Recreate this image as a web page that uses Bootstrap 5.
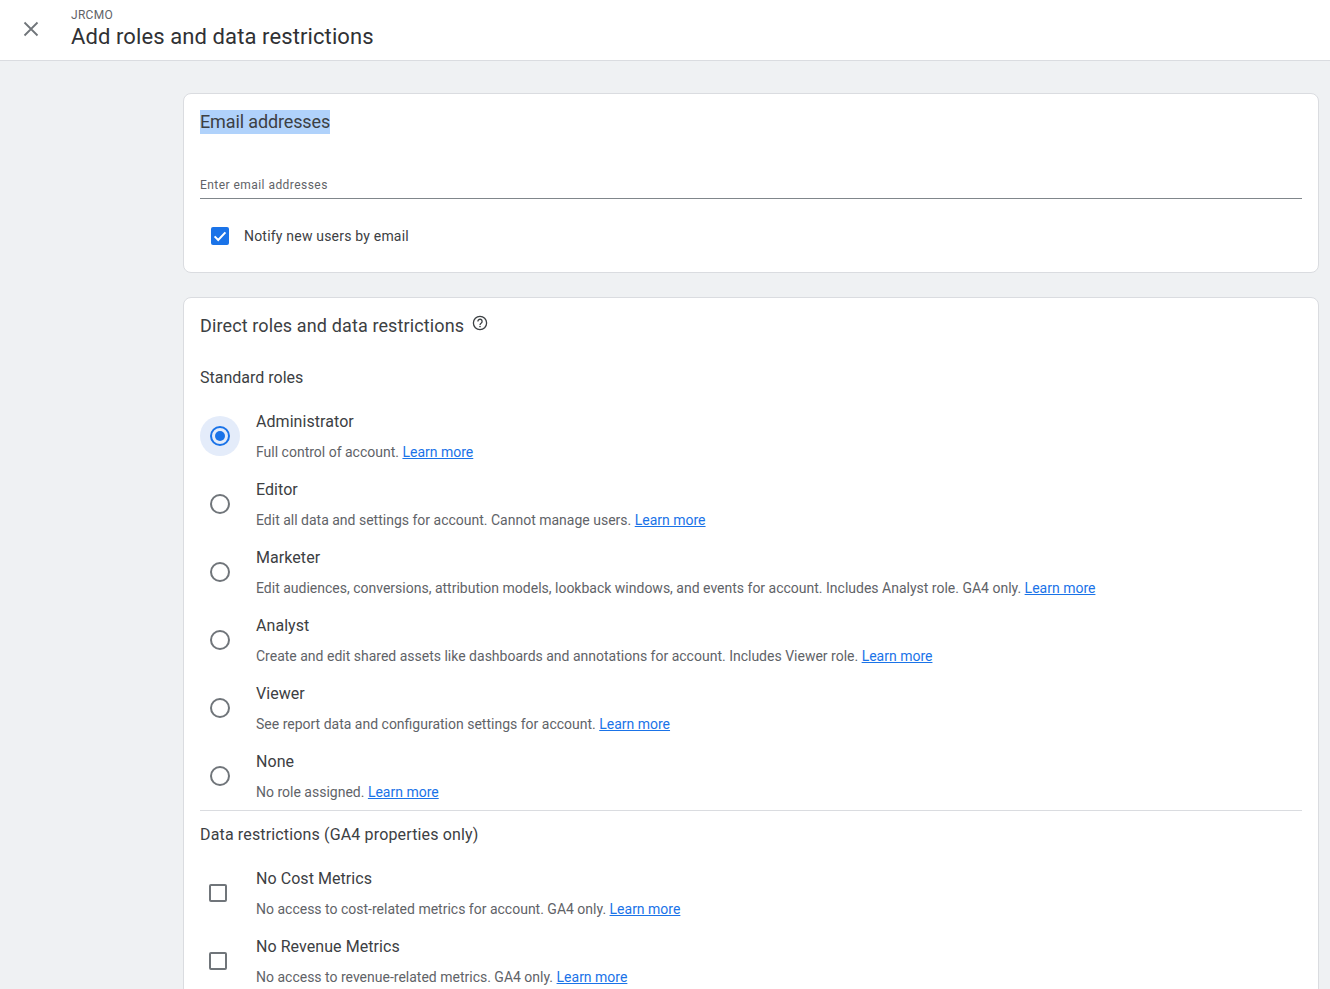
<!DOCTYPE html>
<html lang="en"><head><meta charset="utf-8"><title>Add roles and data restrictions</title>
<link href="https://cdn.jsdelivr.net/npm/bootstrap@5.3.0/dist/css/bootstrap.min.css" rel="stylesheet">
<style>
html,body{height:989px;overflow:hidden}
body{font-family:Roboto,"Liberation Sans",sans-serif;background:#eff1f3;color:#202124}
.top-bar{height:61px;background:#fff;border-bottom:1px solid #dadce0}
.close-cell{width:62px;height:57px}
.title-cell{margin-left:9px}
.crumb{font-size:12px;line-height:14px;letter-spacing:.3px;color:#5f6368;padding-top:8px;box-sizing:content-box}
.page-title{font-size:22px;line-height:30px;font-weight:400;margin:0;color:#303134;letter-spacing:.1px}
.main-col{margin-left:183px;width:1136px;padding-top:32px}
.panel{background:#fff;border:1px solid #dadce0;border-radius:8px;padding:0 16px}
.panel-one{height:180px;margin-bottom:24px}
.panel-two{height:800px}
.sel-text{display:inline-block;background:#b0d2fb;font-size:18px;line-height:24px;margin-top:16px;color:#3c4043;letter-spacing:-.13px;height:24px}
.mail-field{margin-top:36px;height:28px;border-bottom:1px solid #80868b;font-size:12px;letter-spacing:.45px;line-height:28px;color:#5f6368}
.notify{margin-top:23px;height:28px;font-size:14px;letter-spacing:.2px;color:#3c4043;padding-left:11px;gap:15px}
.sec-title{font-size:18px;line-height:24px;font-weight:400;color:#3c4043;margin:0;padding-top:16px;gap:8px;letter-spacing:.12px}
.help-icon{margin-top:1px}
.sub-title{font-size:16px;line-height:24px;font-weight:400;color:#3c4043;margin:0}
.std-title{padding-top:28px;padding-bottom:14px}
.opt-row{height:68px}
.opt-mark{width:56px;flex:none;padding-top:12px}
.ring-wrap{width:40px;height:40px;border-radius:50%}
.ring-on{background:#e4ecfa}
.opt-name{font-size:16px;line-height:24px;color:#3c4043;padding-top:6px;letter-spacing:.06px}
.opt-desc{font-size:14px;line-height:20px;color:#5f6368;margin-top:8px}
.opt-desc a{color:#1a73e8}
.rule{height:1px;background:#dadce0;margin-top:-2px}
.data-title{padding-top:12px;padding-bottom:14px;letter-spacing:.15px}
.box-wrap{padding:11px 0 0 9px}
</style></head><body>
<header class="top-bar d-flex">
 <div class="close-cell d-flex align-items-center justify-content-center flex-shrink-0">
  <svg width="16" height="16" viewBox="0 0 16 16" fill="none" stroke="#70757a" stroke-width="1.8"><path d="M1.5 1.5 14.5 14.5M14.5 1.5 1.5 14.5"/></svg>
 </div>
 <div class="title-cell">
  <div class="crumb">JRCMO</div>
  <h1 class="page-title">Add roles and data restrictions</h1>
 </div>
</header>
<main class="main-col">
 <section class="panel panel-one">
  <span class="sel-text">Email addresses</span>
  <div class="mail-field">Enter email addresses</div>
  <div class="notify d-flex align-items-center">
   <svg width="18" height="18" viewBox="0 0 18 18"><rect width="18" height="18" rx="2" fill="#1a73e8"/><path d="M3.6 9.4 7.2 13 14.4 5.4" fill="none" stroke="#fff" stroke-width="2"/></svg>
   <span>Notify new users by email</span>
  </div>
 </section>
 <section class="panel panel-two">
  <h2 class="sec-title d-flex align-items-start"><span>Direct roles and data restrictions</span>
   <svg class="help-icon" width="16" height="16" viewBox="0 0 16 16" fill="none"><circle cx="8" cy="8" r="6.6" stroke="#3c4043" stroke-width="1.3"/><path d="M5.9 6.4a2.1 2.1 0 1 1 3.4 1.6c-.8.6-1.3 1-1.3 2" stroke="#3c4043" stroke-width="1.3"/><circle cx="8" cy="11.6" r=".8" fill="#3c4043"/></svg></h2>
  <h3 class="sub-title std-title">Standard roles</h3>
  <div class="opt-row d-flex"><div class="opt-mark"><div class="ring-wrap ring-on d-flex align-items-center justify-content-center"><svg width="20" height="20" viewBox="0 0 20 20" fill="none"><circle cx="10" cy="10" r="9" stroke="#1a73e8" stroke-width="2"/><circle cx="10" cy="10" r="5" fill="#1a73e8"/></svg></div></div><div><div class="opt-name">Administrator</div><div class="opt-desc">Full control of account. <a href="#">Learn more</a></div></div></div>
  <div class="opt-row d-flex"><div class="opt-mark"><div class="ring-wrap d-flex align-items-center justify-content-center"><svg width="20" height="20" viewBox="0 0 20 20" fill="none"><circle cx="10" cy="10" r="9" stroke="#70757a" stroke-width="2"/></svg></div></div><div><div class="opt-name">Editor</div><div class="opt-desc">Edit all data and settings for account. Cannot manage users. <a href="#">Learn more</a></div></div></div>
  <div class="opt-row d-flex"><div class="opt-mark"><div class="ring-wrap d-flex align-items-center justify-content-center"><svg width="20" height="20" viewBox="0 0 20 20" fill="none"><circle cx="10" cy="10" r="9" stroke="#70757a" stroke-width="2"/></svg></div></div><div><div class="opt-name">Marketer</div><div class="opt-desc">Edit audiences, conversions, attribution models, lookback windows, and events for account. Includes Analyst role. GA4 only. <a href="#">Learn more</a></div></div></div>
  <div class="opt-row d-flex"><div class="opt-mark"><div class="ring-wrap d-flex align-items-center justify-content-center"><svg width="20" height="20" viewBox="0 0 20 20" fill="none"><circle cx="10" cy="10" r="9" stroke="#70757a" stroke-width="2"/></svg></div></div><div><div class="opt-name">Analyst</div><div class="opt-desc">Create and edit shared assets like dashboards and annotations for account. Includes Viewer role. <a href="#">Learn more</a></div></div></div>
  <div class="opt-row d-flex"><div class="opt-mark"><div class="ring-wrap d-flex align-items-center justify-content-center"><svg width="20" height="20" viewBox="0 0 20 20" fill="none"><circle cx="10" cy="10" r="9" stroke="#70757a" stroke-width="2"/></svg></div></div><div><div class="opt-name">Viewer</div><div class="opt-desc">See report data and configuration settings for account. <a href="#">Learn more</a></div></div></div>
  <div class="opt-row d-flex"><div class="opt-mark"><div class="ring-wrap d-flex align-items-center justify-content-center"><svg width="20" height="20" viewBox="0 0 20 20" fill="none"><circle cx="10" cy="10" r="9" stroke="#70757a" stroke-width="2"/></svg></div></div><div><div class="opt-name">None</div><div class="opt-desc">No role assigned. <a href="#">Learn more</a></div></div></div>
  <div class="rule"></div>
  <h3 class="sub-title data-title">Data restrictions (GA4 properties only)</h3>
  <div class="opt-row d-flex"><div class="opt-mark"><div class="box-wrap"><svg class="d-block" width="18" height="18" viewBox="0 0 18 18" fill="none"><rect x="1" y="1" width="16" height="16" rx="1" stroke="#70757a" stroke-width="2"/></svg></div></div><div><div class="opt-name">No Cost Metrics</div><div class="opt-desc">No access to cost-related metrics for account. GA4 only. <a href="#">Learn more</a></div></div></div>
  <div class="opt-row d-flex"><div class="opt-mark"><div class="box-wrap"><svg class="d-block" width="18" height="18" viewBox="0 0 18 18" fill="none"><rect x="1" y="1" width="16" height="16" rx="1" stroke="#70757a" stroke-width="2"/></svg></div></div><div><div class="opt-name">No Revenue Metrics</div><div class="opt-desc">No access to revenue-related metrics. GA4 only. <a href="#">Learn more</a></div></div></div>
 </section>
</main>
<script src="https://cdn.jsdelivr.net/npm/bootstrap@5.3.0/dist/js/bootstrap.bundle.min.js"></script>
</body></html>
